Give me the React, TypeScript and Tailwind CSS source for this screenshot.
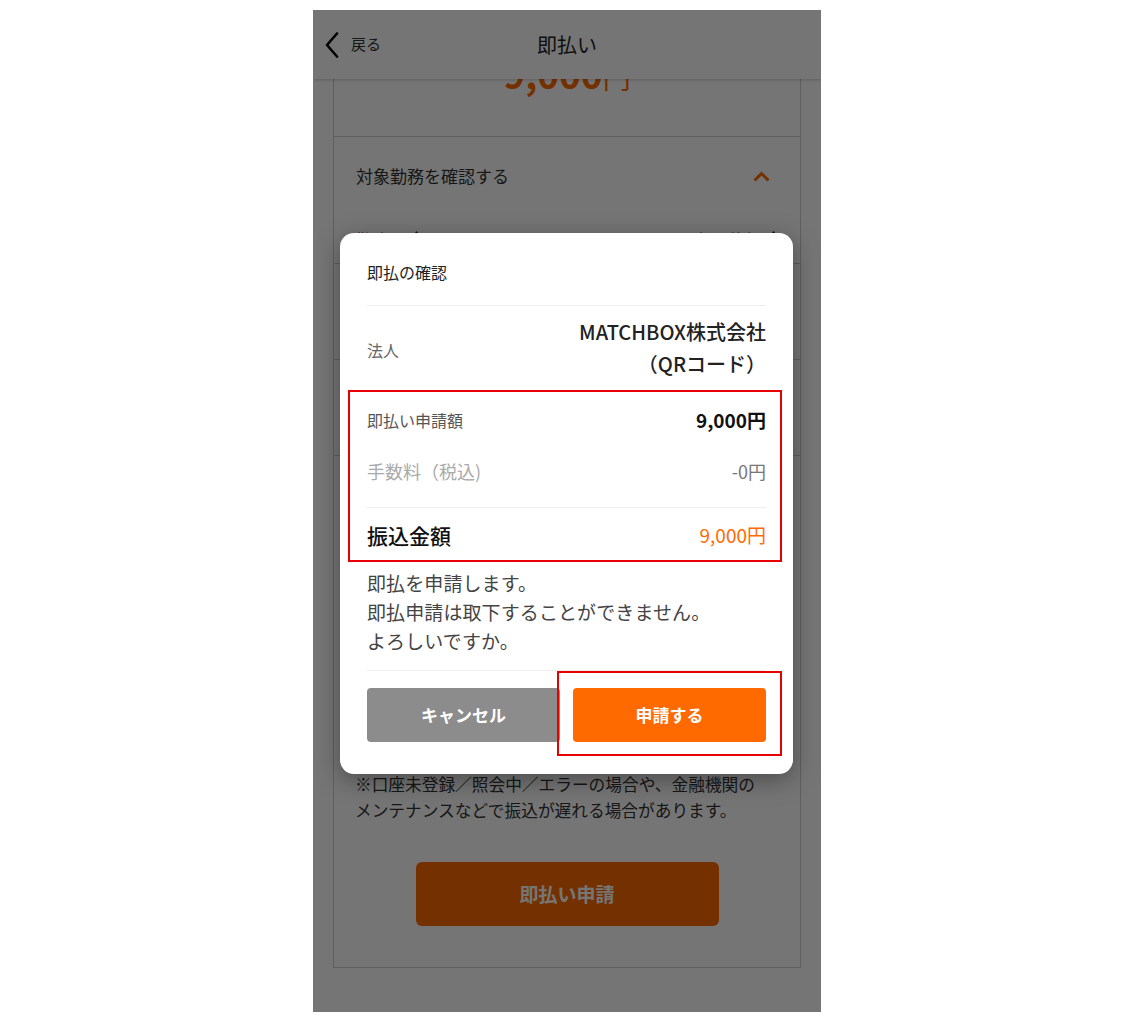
import React from 'react';

const SortIcon: React.FC = () => (
  <svg width="9" height="16" viewBox="0 0 9 16" className="fill-[#222]">
    <path d="M4.5 0 L9 6 H0 Z" />
    <path d="M4.5 16 L0 10 H9 Z" />
  </svg>
);

const shifts = [
  { date: '2024/05/20（月）', amount: '4,500円' },
  { date: '2024/05/21（火）', amount: '4,500円' },
];

export default function App() {
  return (
    <div className="min-h-screen bg-white flex justify-center pt-[10px] font-['Noto_Sans_CJK_JP','Noto_Sans',sans-serif]">
      <div className="relative w-[508px] h-[1002px] overflow-hidden bg-white">
        {/* Header */}
        <header className="absolute top-0 inset-x-0 z-10 h-[69px] bg-white shadow-[0_1px_3px_rgba(0,0,0,0.2)] grid grid-cols-3 items-center">
          <button className="flex items-center gap-3 pl-3 text-[15px] text-[#333]">
            <svg width="14" height="26" viewBox="0 0 14 26" fill="none" stroke="#000" strokeWidth="2.6" strokeLinecap="round" strokeLinejoin="round">
              <path d="M12 1.5 L2 13 L12 24.5" />
            </svg>
            戻る
          </button>
          <h1 className="text-center text-[20px] font-normal text-[#222]">即払い</h1>
          <div />
        </header>

        {/* Main content */}
        <main className="px-5">
          <div className="-mt-5 border border-[#cfcfcf]">
            <div className="pt-[62px] pb-[34px] text-center leading-[40px] text-[#ff6a00] border-b border-[#cfcfcf]">
              <span className="text-[37px] font-bold">9,000</span>
              <span className="text-[28px]">円</span>
            </div>

            <div className="h-[78px] flex items-center justify-between px-[22px] pr-[30px]">
              <span className="text-[17px] text-[#333]">対象勤務を確認する</span>
              <svg width="17" height="11" viewBox="0 0 17 11" fill="none" stroke="#ff6a00" strokeWidth="3">
                <path d="M1.5 9.5 L8.5 2.5 L15.5 9.5" />
              </svg>
            </div>

            <div className="h-[48px] flex items-center justify-between px-[22px] text-[16px] text-[#333]">
              <div className="flex items-center gap-2">
                勤務日
                <SortIcon />
              </div>
              <div className="flex items-center gap-2">
                即払可能額
                <SortIcon />
              </div>
            </div>
            {shifts.map((s) => (
              <div key={s.date} className="h-[96px] border-t border-[#cfcfcf] flex items-center justify-between px-[22px] text-[16px] text-[#333]">
                <span>{s.date}</span>
                <span>{s.amount}</span>
              </div>
            ))}

            <div className="border-t border-[#cfcfcf] h-[316px] px-[22px] pt-6 flex flex-col gap-4 text-[16px] text-[#333]">
              <div className="flex justify-between">
                <span>合計</span>
                <span>9,000円</span>
              </div>
              <div className="flex justify-between">
                <span>振込先</span>
                <span>MATCHBOX銀行 本店</span>
              </div>
            </div>

            <p className="px-[21px] text-[16.7px] leading-[26px] text-[#333]">
              ※口座未登録／照会中／エラーの場合や、金融機関の
              <br />
              メンテナンスなどで振込が遅れる場合があります。
            </p>

            <div className="pt-[39px] pb-[41px] flex justify-center">
              <button className="w-[303px] h-[64px] rounded-md bg-[#ff6a00] text-white font-bold text-[19px]">
                即払い申請
              </button>
            </div>
          </div>
        </main>

        {/* Overlay */}
        <div className="absolute inset-0 z-20 bg-black/[0.54]" />

        {/* Confirm dialog */}
        <div className="absolute z-30 left-[27px] top-[223px] w-[453px] rounded-[14px] bg-white px-[27px] pb-[32px] shadow-[0_6px_24px_rgba(0,0,0,0.35)]">
          <div className="pt-7 pb-[22px] text-[16px] leading-[22px] text-[#222] border-b border-[#eeeeee]">
            即払の確認
          </div>

          <div className="py-[10px] flex items-center justify-between">
            <span className="text-[16px] text-[#666] pt-1">法人</span>
            <div className="text-right text-[20px] leading-[32px] font-medium text-[#222]">
              MATCHBOX株式会社
              <br />
              （QRコード）
            </div>
          </div>

          <div className="-ml-[19px] -mr-[16px] pl-[17px] pr-[14px] border-2 border-[#e60000]">
            <div className="pt-[14px] flex items-center justify-between leading-[28px]">
              <span className="text-[16px] text-[#555]">即払い申請額</span>
              <span className="text-[19px] font-bold text-[#111]">9,000円</span>
            </div>
            <div className="pt-[23px] pb-[22px] flex items-center justify-between leading-[28px] border-b border-[#eeeeee]">
              <span className="text-[18px] text-[#aaaaaa]">手数料（税込)</span>
              <span className="text-[18px] text-[#777]">-0円</span>
            </div>
            <div className="pt-[13px] pb-[11px] flex items-center justify-between leading-[28px]">
              <span className="text-[21px] font-medium text-[#111]">振込金額</span>
              <span className="text-[19px] text-[#ff6a00]">9,000円</span>
            </div>
          </div>

          <p className="pt-[6px] pb-[15px] text-[19px] tracking-[0.1px] leading-[29px] text-[#444] border-b border-[#eeeeee]">
            即払を申請します。
            <br />
            即払申請は取下することができません。
            <br />
            よろしいですか。
          </p>

          <div className="pt-[17px] grid grid-cols-2 gap-[13px]">
            <button className="h-[54px] rounded-[4px] bg-[#8c8c8c] text-white font-bold text-[17px]">
              キャンセル
            </button>
            <div className="relative">
              <button className="w-full h-[54px] rounded-[4px] bg-[#ff6a00] text-white font-bold text-[17px]">
                申請する
              </button>
              <div className="absolute -left-4 -right-4 -top-[17px] -bottom-[14px] border-2 border-[#e60000] pointer-events-none" />
            </div>
          </div>
        </div>
      </div>
    </div>
  );
}
